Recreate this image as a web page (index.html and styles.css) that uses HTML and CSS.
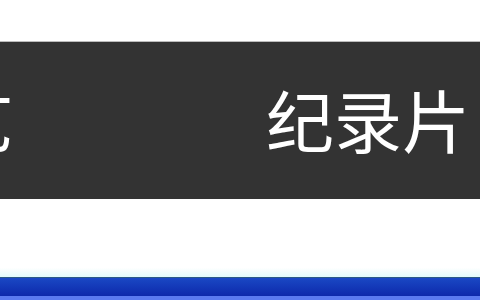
FILE: index.html
```html
<!DOCTYPE html>
<html lang="zh-CN">
<head>
    <meta charset="UTF-8">
    <meta name="viewport" content="width=device-width, initial-scale=1.0">
    <link rel="stylesheet" href="styles.css">
    <title>纪录片</title>
</head>
<body>
    <div class="top-bar"></div>

    <div class="tab-bar">
        <a href="#" class="tab-item first-tab">综艺</a>
        <a href="#" class="tab-item">纪录片</a>
    </div>

    <div class="page-body"></div>

    <div class="task-bar">
        <div class="task-bar-edge"></div>
    </div>
</body>
</html>
```

FILE: styles.css
```css
body {
    font-family: "Noto Sans CJK SC", "Noto Sans", sans-serif;
    margin: 0;
    padding: 0;
    background-color: #fff;
    height: 300px;
    overflow: hidden;
    display: flex;
    flex-direction: column;
}

.top-bar {
    height: 41px;
    border-bottom: 1px solid #bcbcbc;
    background-color: #fff;
}

.tab-bar {
    height: 153px;
    padding-bottom: 4px;
    background-color: #333;
    display: flex;
    align-items: center;
    overflow: hidden;
    gap: 252px; /* расстояние между вкладками */
}

.tab-item {
    flex: none;
    color: #fff;
    text-decoration: none;
    font-size: 68px;
    font-weight: 400;
    line-height: 1;
}

.first-tab {
    margin-left: -122px; /* видна только правая часть */
}

.page-body {
    flex: 1;
    background: linear-gradient(to bottom, #fff 0%, #fff 88%, #e2fbfb 100%);
}

.task-bar {
    height: 22px;
    border-top: 1px solid #2b5a86;
    background: linear-gradient(to bottom, #1a48c4, #0a22a6);
    display: flex;
    flex-direction: column;
    justify-content: flex-end;
}

.task-bar-edge {
    height: 4px;
    background-color: #5a7af0;
}
```
